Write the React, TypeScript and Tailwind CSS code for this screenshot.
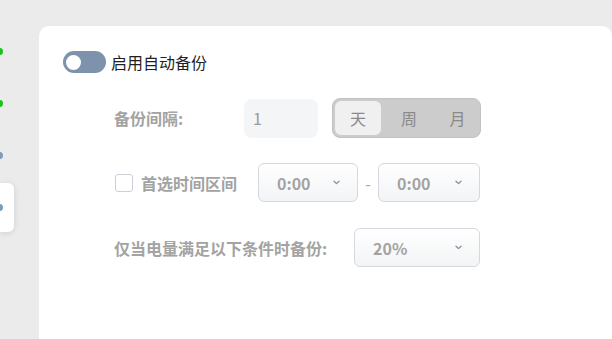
import React from "react";

const font = { fontFamily: '"Microsoft YaHei","Noto Sans CJK SC","Noto Sans",sans-serif' };

function Chevron() {
  return (
    <svg width="7" height="5" viewBox="0 0 7 5" className="shrink-0">
      <path d="M1 1.2 L3.5 3.6 L6 1.2" fill="none" stroke="#8a8f99" strokeWidth="1.3" strokeLinecap="round" strokeLinejoin="round" />
    </svg>
  );
}

function Select({ value, w, pl = 18 }: { value: string; w: number; pl?: number }) {
  return (
    <div
      className="h-[39px] rounded-[6px] border border-[#d5d8de] bg-gradient-to-b from-white to-[#f3f4f6] flex items-center justify-between pr-[17px]"
      style={{ width: w, paddingLeft: pl }}
    >
      <span className="text-[16px] font-bold text-[#a3a3a3]">{value}</span>
      <Chevron />
    </div>
  );
}

export default function App() {
  return (
    <div className="w-[612px] h-[339px] bg-[#ebebeb] flex overflow-hidden" style={font}>
      <div className="w-[39px] shrink-0 flex flex-col pt-[48px]">
        <div className="w-[7px] h-[7px] rounded-full bg-[#1fc01f] -ml-[4px]" />
        <div className="w-[7px] h-[7px] rounded-full bg-[#1fc01f] -ml-[4px] mt-[45px]" />
        <div className="w-[7px] h-[7px] rounded-full bg-[#7f9bbb] -ml-[4px] mt-[45px]" />
        <div className="w-[14px] h-[49px] mt-[24px] bg-white rounded-r-[6px] shadow-[0_1px_6px_rgba(0,0,0,0.12)] flex items-center">
          <div className="w-[7px] h-[7px] rounded-full bg-[#7f9bbb] -ml-[4px]" />
        </div>
      </div>
      <div className="flex-1 mt-[26px] bg-white rounded-t-[10px] pl-[24px] pt-[25px]">
        <div className="flex items-center h-[22px]">
          <div className="w-[43px] h-[22px] rounded-full bg-[#7d93ab] flex items-center pl-[3px]">
            <div className="w-[15px] h-[15px] rounded-full bg-white" />
          </div>
          <span className="ml-[5px] text-[16px] text-[#1f1f1f]">启用自动备份</span>
        </div>

        <div className="pl-[51px]">
          <div className="flex items-center mt-[25px] h-[40px]">
            <span className="w-[130px] text-[16px] font-bold text-[#a3a3a3]">备份间隔:</span>
            <div className="w-[74px] h-[39px] rounded-[8px] bg-[#f4f5f7] flex items-center pl-[9px] text-[16px] text-[#9a9a9a]">1</div>
            <div className="ml-[14px] w-[149px] h-[40px] rounded-[8px] bg-[#cccccc] border border-[#c2c2c2] flex items-center p-[2px] text-[16px] text-[#8a8a8a]">
              <div className="w-[46px] h-full rounded-[6px] bg-[#f0f0f0] flex items-center justify-center">天</div>
              <div className="w-[56px] flex items-center justify-center">周</div>
              <div className="w-[41px] flex items-center justify-center">月</div>
            </div>
          </div>

          <div className="flex items-center mt-[25px] h-[39px]">
            <div className="w-[144px] flex items-center">
              <div className="w-[18px] h-[18px] rounded-[3px] border border-[#cbd0d8] bg-white ml-[1px]" />
              <span className="ml-[8px] text-[16px] font-bold text-[#a3a3a3]">首选时间区间</span>
            </div>
            <Select value="0:00" w={100} />
            <span className="w-[20px] text-center text-[16px] text-[#a3a3a3]">-</span>
            <Select value="0:00" w={102} />
          </div>

          <div className="flex items-center mt-[26px] h-[39px]">
            <span className="w-[240px] text-[16px] font-bold text-[#a3a3a3]">仅当电量满足以下条件时备份:</span>
            <Select value="20%" w={126} />
          </div>
        </div>
      </div>
    </div>
  );
}
